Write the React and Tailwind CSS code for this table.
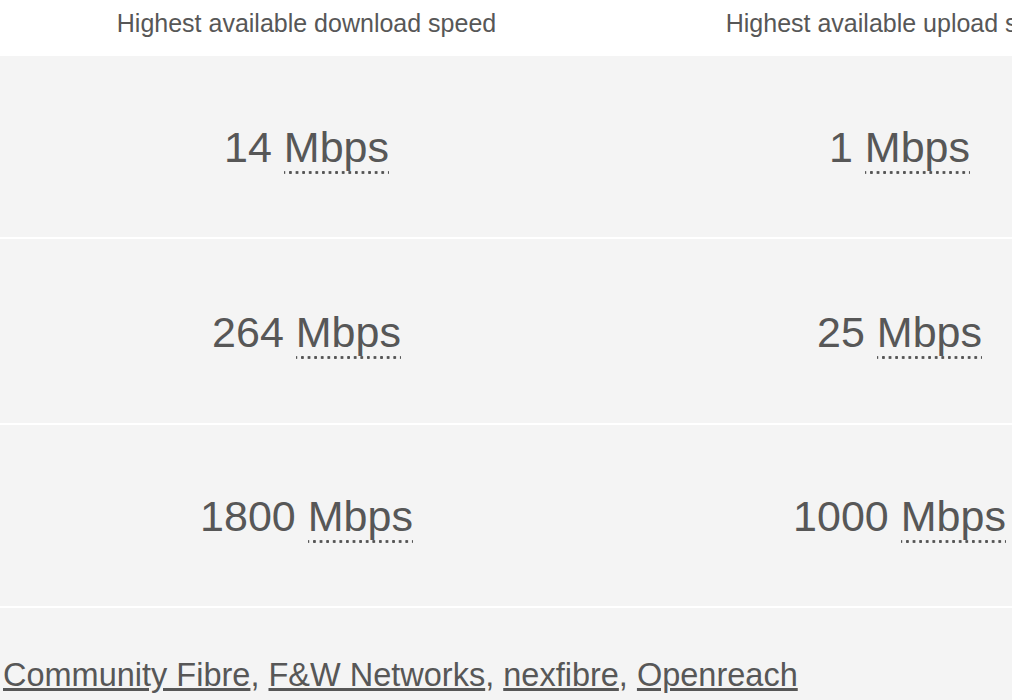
import React from "react";

const rows = [
  { down: "14", up: "1" },
  { down: "264", up: "25" },
  { down: "1800", up: "1000" },
];

const providers = ["Community Fibre", "F&W Networks", "nexfibre", "Openreach"];

// dotted "abbr" underline under the unit
const Unit = () => (
  <abbr
    title="Megabits per second"
    className="inline-block no-underline leading-none pb-[5px] bg-[radial-gradient(circle,#555555_1.3px,transparent_1.7px)] bg-[length:6.6px_3px] bg-repeat-x bg-bottom"
  >
    Mbps
  </abbr>
);

const SpeedCell = ({ value }) => (
  <div className="w-[593px] shrink-0 flex items-center justify-center pt-[7px] text-[43px] leading-none">
    <span>
      {value} <Unit />
    </span>
  </div>
);

export default function App() {
  return (
    <div
      className="w-[1012px] h-[700px] overflow-hidden bg-[#f4f4f4] text-[#575757]"
      style={{ fontFamily: '"Liberation Sans", Arial, sans-serif' }}
    >
      <div className="w-[1300px]">
        {/* Header */}
        <div className="flex h-[56px] bg-white pl-[10px] pt-[9px] text-[25px] leading-[29px]">
          <div className="w-[593px] shrink-0 text-center">Highest available download speed</div>
          <div className="w-[593px] shrink-0 text-center">Highest available upload speed</div>
        </div>

        {/* Speed rows */}
        {rows.map((row, i) => (
          <div
            key={i}
            className={`flex pl-[10px] bg-[#f4f4f4] border-b-2 border-white ${
              i === 1 ? "h-[186px]" : "h-[183px]"
            }`}
          >
            <SpeedCell value={row.down} />
            <SpeedCell value={row.up} />
          </div>
        ))}

        {/* Providers */}
        <div className="pl-[3px] pt-[51px] text-[32.5px] leading-none">
          {providers.map((p, i) => (
            <React.Fragment key={p}>
              <a href="#" className="underline text-[#575757]">
                {p}
              </a>
              {i < providers.length - 1 && ", "}
            </React.Fragment>
          ))}
        </div>
      </div>
    </div>
  );
}
